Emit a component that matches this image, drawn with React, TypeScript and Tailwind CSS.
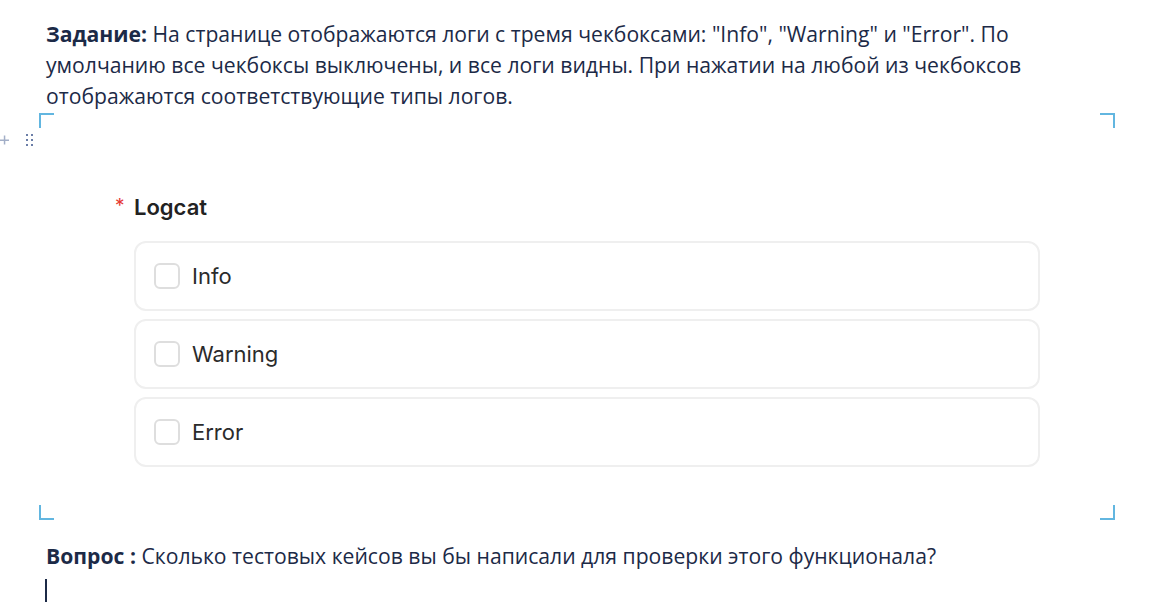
import React from "react";

const Corner = ({ pos }: { pos: "tl" | "tr" | "bl" | "br" }) => {
  const cls =
    pos === "tl"
      ? "border-t-2 border-l-2"
      : pos === "tr"
      ? "border-t-2 border-r-2"
      : pos === "bl"
      ? "border-b-2 border-l-2"
      : "border-b-2 border-r-2";
  return <div className={`w-[15px] h-[15px] border-[#62b6e0] ${cls}`} />;
};

const Option = ({ label }: { label: string }) => (
  <div className="h-[70px] rounded-[12px] border-2 border-[#efefef] flex items-center pl-[18px]">
    <div className="w-[26px] h-[26px] rounded-[6px] border-2 border-[#dedede] bg-white" />
    <span className="ml-[12px] text-[22px] text-[#2b2b2b]">{label}</span>
  </div>
);

export default function App() {
  return (
    <div
      className="w-[1161px] h-[603px] bg-white relative overflow-hidden text-[#1c2a47]"
      style={{ fontFamily: "'Open Sans', 'Noto Sans', sans-serif" }}
    >
      <div className="ml-[46px] w-[1000px] pt-[18px] text-[21.15px] leading-[31px]">
        <span className="font-bold">Задание:</span> На странице отображаются логи с тремя чекбоксами: "Info", "Warning" и "Error". По умолчанию все чекбоксы выключены, и все логи видны. При нажатии на любой из чекбоксов отображаются соответствующие типы логов.
      </div>

      <div className="mt-[2px] mx-[39px] w-[1076px] relative">
        <div className="flex justify-between">
          <Corner pos="tl" />
          <Corner pos="tr" />
        </div>
        <div
          className="pl-[95px] pr-[75px] pt-[65px] pb-[38px]"
          style={{ fontFamily: "Inter, 'Noto Sans', sans-serif" }}
        >
          <div className="flex items-center h-[28px] -ml-[19px]">
            <span className="text-[#e53935] text-[19px] leading-none w-[19px] -mt-[3px]">*</span>
            <span className="text-[22px] font-semibold text-[#222]">Logcat</span>
          </div>
          <div className="mt-[20px] flex flex-col gap-[8px]">
            <Option label="Info" />
            <Option label="Warning" />
            <Option label="Error" />
          </div>
        </div>
        <div className="flex justify-between">
          <Corner pos="bl" />
          <Corner pos="br" />
        </div>
      </div>

      <div className="absolute left-0 top-[134px] flex items-center">
        <svg width="9" height="12" viewBox="0 0 9 12">
          <rect x="0" y="5.5" width="9" height="1.5" fill="#a3afc8" />
          <rect x="3.8" y="1.5" width="1.5" height="9" fill="#a3afc8" />
        </svg>
        <svg className="ml-[17px]" width="8" height="12" viewBox="0 0 8 12">
          <rect x="0" y="0" width="2" height="2" fill="#6b7ea8" />
          <rect x="5" y="0" width="2" height="2" fill="#6b7ea8" />
          <rect x="0" y="5" width="2" height="2" fill="#6b7ea8" />
          <rect x="5" y="5" width="2" height="2" fill="#6b7ea8" />
          <rect x="0" y="10" width="2" height="2" fill="#6b7ea8" />
          <rect x="5" y="10" width="2" height="2" fill="#6b7ea8" />
        </svg>
      </div>

      <div className="pl-[46px] mt-[20px] text-[21.15px] leading-[31px]">
        <span className="font-bold">Вопрос :</span> Сколько тестовых кейсов вы бы написали для проверки этого функционала?
      </div>
      <div className="ml-[45px] mt-[8px] w-[2px] h-[23px] bg-[#1c2a47]" />
    </div>
  );
}
